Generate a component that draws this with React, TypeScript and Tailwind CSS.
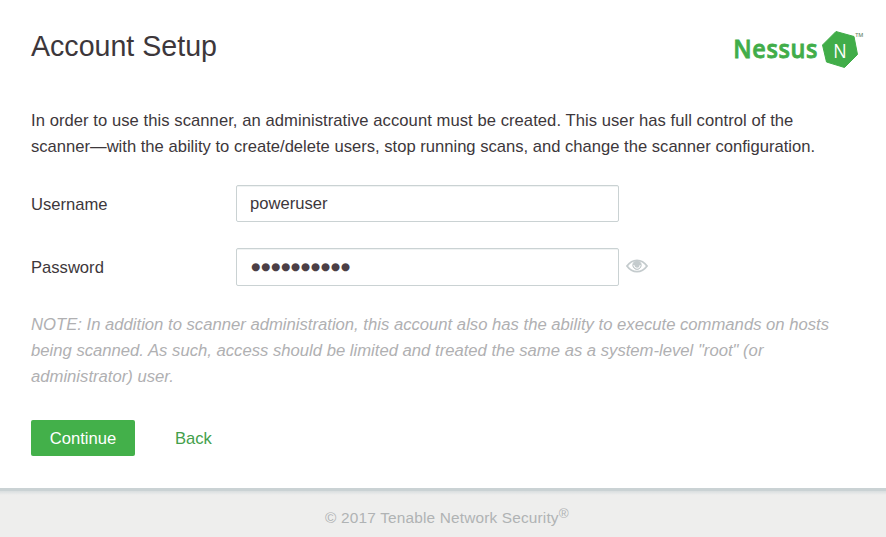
export default function App() {
  return (
    <main className="flex h-[537px] w-[886px] flex-col overflow-hidden bg-[#eeeeed] font-['Liberation_Sans',Arial,sans-serif] text-[16.6px] text-[#3d373b]">
      <section className="h-[488px] shrink-0 bg-white px-[31px] pt-[28px]">
        <header className="flex h-[80px] justify-between">
          <h1 className="text-[28.6px] leading-[36px]">Account Setup</h1>
          <svg className="-mr-[9px] mt-px h-[40px] w-[130px]" viewBox="734 29 130 40" fill="#41ad49">
            <text transform="translate(733.3 57.5) scale(0.92 1)" fontFamily="Open Sans" fontWeight="600" fontSize="25.5" stroke="#41ad49" strokeWidth="0.8" textLength="91.5">Nessus</text>
            <path d="M836 31.5L854 36.5L857.5 54.5L844.5 67.5L826.5 62L822.5 45Z" stroke="#41ad49" strokeLinejoin="round" />
            <text x="833.3" y="57.5" fill="white" fontFamily="Open Sans" fontSize="19.5" textLength="13.4" lengthAdjust="spacingAndGlyphs">N</text>
            <text x="855.3" y="36.5" fill="#6d8b70" fontFamily="Open Sans" fontWeight="600" fontSize="5.5" textLength="8">TM</text>
          </svg>
        </header>
        <p className="whitespace-nowrap leading-[26px]"><span className="tracking-[0.06px]">In order to use this scanner, an administrative account must be created. This user has full control of the</span><br />scanner—with the ability to create/delete users, stop running scans, and change the scanner configuration.</p>
        <form className="mt-[25px] flex flex-col gap-[26px]">
          <div className="flex h-[37px] items-center"><label htmlFor="username" className="w-[205px] pt-[3px]">Username</label><input id="username" className="h-[37px] w-[383px] rounded-[2px] border border-[#cad2d3] px-[13px] shadow-[inset_0_1px_0_#f0f3f3] outline-none" defaultValue="poweruser" /></div>
          <div className="flex h-[38px] items-center"><label htmlFor="password" className="w-[205px] pt-[2px]">Password</label><input id="password" className="h-[38px] w-[383px] rounded-[2px] border border-[#cad2d3] px-[14px] pb-[2px] font-['DejaVu_Sans'] text-[10.5px] tracking-[0.8px] text-[#4c3f45] shadow-[inset_0_1px_0_#f0f3f3] outline-none" defaultValue="●●●●●●●●●●" />
            <svg className="-mt-[2px] ml-[7px] h-[14px] w-[22px]" viewBox="0 0 22 14" fill="none" stroke="#c4cbcd">
              <path d="M1 7Q5 1.3 11 1.3T21 7Q17 12.7 11 12.7T1 7Z" strokeWidth="1.8" />
              <circle cx="11" cy="6.2" r="4.2" fill="#c4cbcd" />
              <path d="M7.8 6Q8 9 11 9.3T14.2 6" stroke="white" strokeWidth="1" />
            </svg>
          </div>
        </form>
        <p className="mt-[26px] whitespace-nowrap text-[16.67px] italic leading-[26px] text-[#b0b0b2]">NOTE: In addition to scanner administration, this account also has the ability to execute commands on hosts<br />being scanned. As such, access should be limited and treated the same as a system-level "root" (or<br />administrator) user.</p>
        <div className="mt-[30px] flex items-center gap-[40px]"><button className="h-[36px] w-[104px] rounded-[2px] bg-[#43b04a] pt-[2px] text-white">Continue</button><button className="pt-[2px] text-[#43a04b]">Back</button></div>
      </section>
      <div className="h-[3px] shrink-0 bg-[#cad2d4]" />
      <div className="h-[4px] shrink-0 bg-linear-to-b from-[#d9dedf] to-[#eeeeed]" />
      <footer className="flex flex-1 items-center justify-center pt-[4px] pl-[8px] text-[15.4px] tracking-[0.17px] text-[#b0b3b4]">© 2017 Tenable Network Security<span className="-mt-2 text-[13.5px]">®</span></footer>
    </main>
  );
}
